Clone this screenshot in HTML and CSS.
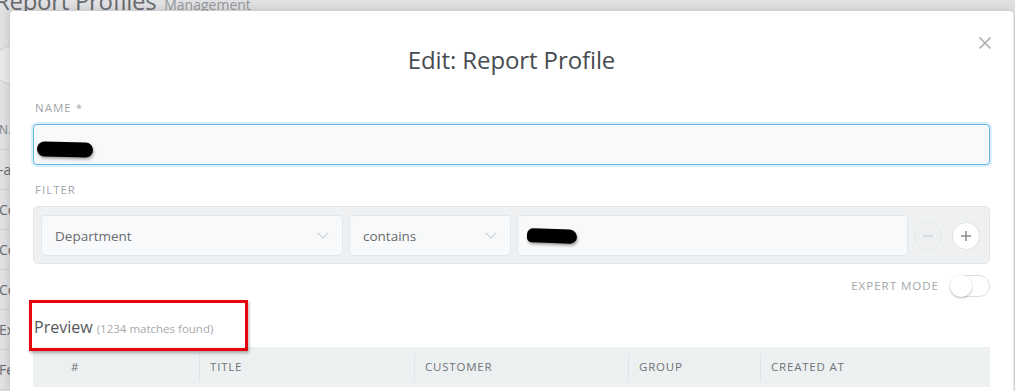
FILE: index.html
```html
<!DOCTYPE html>
<html lang="en">
<head>
<meta charset="utf-8">
<title>Edit: Report Profile</title>
<link rel="stylesheet" href="styles.css">
</head>
<body>
<div class="page">
  <div class="page-head">
    <h1 class="page-title">Report Profiles <span class="page-sub">Management</span></h1>
  </div>
  <div class="page-search">Q</div>
  <div class="page-list">
    <div class="page-row head">NAME</div>
    <div class="page-row">-all-</div>
    <div class="page-row">Company A</div>
    <div class="page-row">Company B</div>
    <div class="page-row">Company C</div>
    <div class="page-row">Export</div>
    <div class="page-row">Feedback</div>
  </div>
</div>
<div class="backdrop"></div>

<div class="modal">
  <div class="modal-header">
    <h2 class="modal-title">Edit: Report Profile</h2>
    <button class="close" aria-label="Close">
      <svg width="14" height="14" viewBox="0 0 14 14"><path d="M1.5 1.5L12.5 12.5M12.5 1.5L1.5 12.5" stroke="#a9acae" stroke-width="1.6" fill="none"/></svg>
    </button>
  </div>

  <div class="modal-body">
    <div class="field">
      <div class="label">Name *</div>
      <div class="input focused"><span class="redact redact-name"></span></div>
    </div>

    <div class="field">
      <div class="label">Filter</div>
      <div class="filter">
        <div class="select sel-attr">Department<span class="chev"></span></div>
        <div class="select sel-op">contains<span class="chev"></span></div>
        <div class="input value"><span class="redact redact-value"></span></div>
        <button class="round minus" aria-label="Remove">
          <svg width="12" height="12" viewBox="0 0 12 12"><path d="M1 6H11" stroke="#d3d7d9" stroke-width="1.5"/></svg>
        </button>
        <button class="round plus" aria-label="Add">
          <svg width="12" height="12" viewBox="0 0 12 12"><path d="M1 6H11M6 1V11" stroke="#8b8f92" stroke-width="1.5"/></svg>
        </button>
      </div>
    </div>

    <div class="expert">
      <span class="label inline">Expert mode</span>
      <span class="toggle"><span class="knob"></span></span>
    </div>

    <div class="preview-head">
      <span class="preview-title">Preview</span>
      <span class="preview-count">(1234 matches found)</span>
    </div>

    <div class="table-head">
      <div class="th c1">#</div>
      <div class="th c2">Title</div>
      <div class="th c3">Customer</div>
      <div class="th c4">Group</div>
      <div class="th c5">Created at</div>
    </div>

    <div class="highlight"></div>
  </div>
</div>
</body>
</html>
```

FILE: styles.css
```css
* { box-sizing: border-box; }

html, body {
  margin: 0;
  height: 100%;
}

body {
  width: 1015px;
  height: 391px;
  overflow: hidden;
  background: #f6f7f8;
  font-family: "Open Sans", "Noto Sans", "DejaVu Sans", sans-serif;
  color: #585c5f;
  position: relative;
}

/* background page */
.page {
  margin-left: -5px;
  width: 1000px;
}
.page-head {
  height: 40px;
  margin-top: -19px;
}
.page-title {
  margin: 0;
  font-weight: 400;
  font-size: 24px;
  line-height: 40px;
  color: #6f7376;
  white-space: nowrap;
  letter-spacing: -0.3px;
}
.page-sub {
  font-size: 14px;
  color: #a3a6a8;
  margin-left: 2px;
  letter-spacing: 0;
}
.page-search {
  margin-top: 24px;
  height: 40px;
  width: 300px;
  border: 1px solid #dcdfe1;
  border-radius: 20px;
  background: #fff;
  padding-left: 23px;
  line-height: 38px;
  font-size: 14px;
  color: #a6a9ab;
  margin-left: -2px;
}
.page-list {
  margin-top: 25px;
  width: 18px;
  overflow: hidden;
}
.page-row {
  height: 40px;
  line-height: 40px;
  border-bottom: 1px solid #e3e5e6;
  font-size: 14px;
  color: #6f7376;
  padding-left: 4px;
  white-space: nowrap;
}
.page-row.head {
  font-size: 12px;
  letter-spacing: 1px;
  color: #8d9193;
}

.backdrop {
  position: absolute;
  inset: 0;
  background: rgba(40, 44, 48, 0.1);
}

/* modal */
.modal {
  position: absolute;
  left: 10px;
  top: 11px;
  width: 1004px;
  height: 380px;
  background: #fff;
  border-right: 1px solid #e6e8e9;
  border-radius: 4px 4px 0 0;
  box-shadow: 0 0 10px rgba(0, 0, 0, 0.18);
  padding: 0 23px;
  overflow: hidden;
}

.modal-header {
  position: relative;
  padding-top: 31px;
}
.modal-title {
  margin: 0;
  text-align: center;
  font-size: 24px;
  font-weight: 400;
  line-height: 36px;
  color: #484c50;
  letter-spacing: -0.1px;
}
.close {
  position: absolute;
  right: -3px;
  top: 24px;
  width: 16px;
  height: 16px;
  padding: 0;
  border: 0;
  background: none;
  display: flex;
  align-items: center;
  justify-content: center;
}

.modal-body {
  position: relative;
  padding-top: 22px;
}

.field + .field { margin-top: 17px; }

.label {
  font-size: 11.5px;
  letter-spacing: 1px;
  text-transform: uppercase;
  color: #a3a6a9;
  line-height: 16px;
  margin-bottom: 8px;
  padding-left: 2px;
}
.label.inline {
  margin: 0;
}

.input, .select {
  height: 41px;
  background: #f8f9fa;
  border: 1px solid #e3e6e8;
  border-radius: 4px;
  display: flex;
  align-items: center;
  font-size: 13.5px;
  color: #686c6f;
}
.input.focused {
  border-color: #62b6e7;
  box-shadow: 0 0 0 2px rgba(98, 182, 231, 0.22);
  padding-left: 3px;
}

.redact {
  display: block;
  background: #000;
  border-radius: 8px;
  box-shadow: 1px 2px 3px rgba(0, 0, 0, 0.35);
}
.redact-name {
  width: 56px;
  height: 15px;
  margin-top: 9px;
  transform: rotate(1.5deg);
}
.redact-value {
  width: 50px;
  height: 14px;
  margin-left: 9px;
  border-radius: 7px 9px 8px 6px;
  transform: rotate(2deg);
}

.filter {
  display: flex;
  align-items: center;
  gap: 6px;
  background: #eef0f1;
  border: 1px solid #e2e5e7;
  border-radius: 5px;
  padding: 8px 9px 7px 7px;
}
.select {
  position: relative;
  padding-left: 13px;
  flex: none;
}
.sel-attr { width: 302px; }
.sel-op { width: 162px; }
.value { flex: 1; }
.chev {
  position: absolute;
  right: 15px;
  top: 13px;
  width: 8px;
  height: 8px;
  border-right: 1.3px solid #cdd0d2;
  border-bottom: 1.3px solid #cdd0d2;
  transform: rotate(45deg);
}

.round {
  flex: none;
  width: 28px;
  height: 28px;
  border-radius: 50%;
  padding: 0;
  display: flex;
  align-items: center;
  justify-content: center;
}
.minus {
  background: #eef0f1;
  border: 1px solid #e6e9ea;
}
.plus {
  margin-left: 4px;
  background: #fff;
  border: 1px solid #e0e3e5;
}

.expert {
  display: flex;
  justify-content: flex-end;
  align-items: center;
  gap: 11px;
  margin-top: 11px;
}
.expert .label {
  padding: 0;
}
.toggle {
  width: 40px;
  height: 22px;
  border: 1px solid #dcdfe1;
  border-radius: 11px;
  background: #fff;
  position: relative;
}
.knob {
  position: absolute;
  left: -1px;
  top: -1px;
  width: 22px;
  height: 22px;
  border-radius: 50%;
  background: #fff;
  box-shadow: 0 1px 2px rgba(0, 0, 0, 0.3);
}

.preview-head {
  margin-top: 18px;
  line-height: 24px;
  padding-left: 1px;
  white-space: nowrap;
}
.preview-title {
  font-size: 16px;
  color: #55595c;
}
.preview-count {
  font-size: 11.5px;
  color: #a6a9ab;
}

.table-head {
  margin-top: 6px;
  height: 40px;
  background: #edf0f1;
  display: flex;
  align-items: center;
}
.th {
  font-size: 11.5px;
  letter-spacing: 0.8px;
  text-transform: uppercase;
  color: #6f7376;
  height: 28px;
  line-height: 28px;
  padding-left: 10px;
  border-left: 1px solid #e1e4e6;
}
.th.c1 { width: 166px; border-left: none; padding-left: 38px; }
.th.c2 { width: 215px; }
.th.c3 { width: 214px; }
.th.c4 { width: 132px; }
.th.c5 { flex: 1; }

.highlight {
  position: absolute;
  left: -4px;
  top: 222px;
  width: 219px;
  height: 51px;
  border: 3px solid #e8060e;
  box-shadow: 1px 2px 3px rgba(0, 0, 0, 0.3);
}
```
